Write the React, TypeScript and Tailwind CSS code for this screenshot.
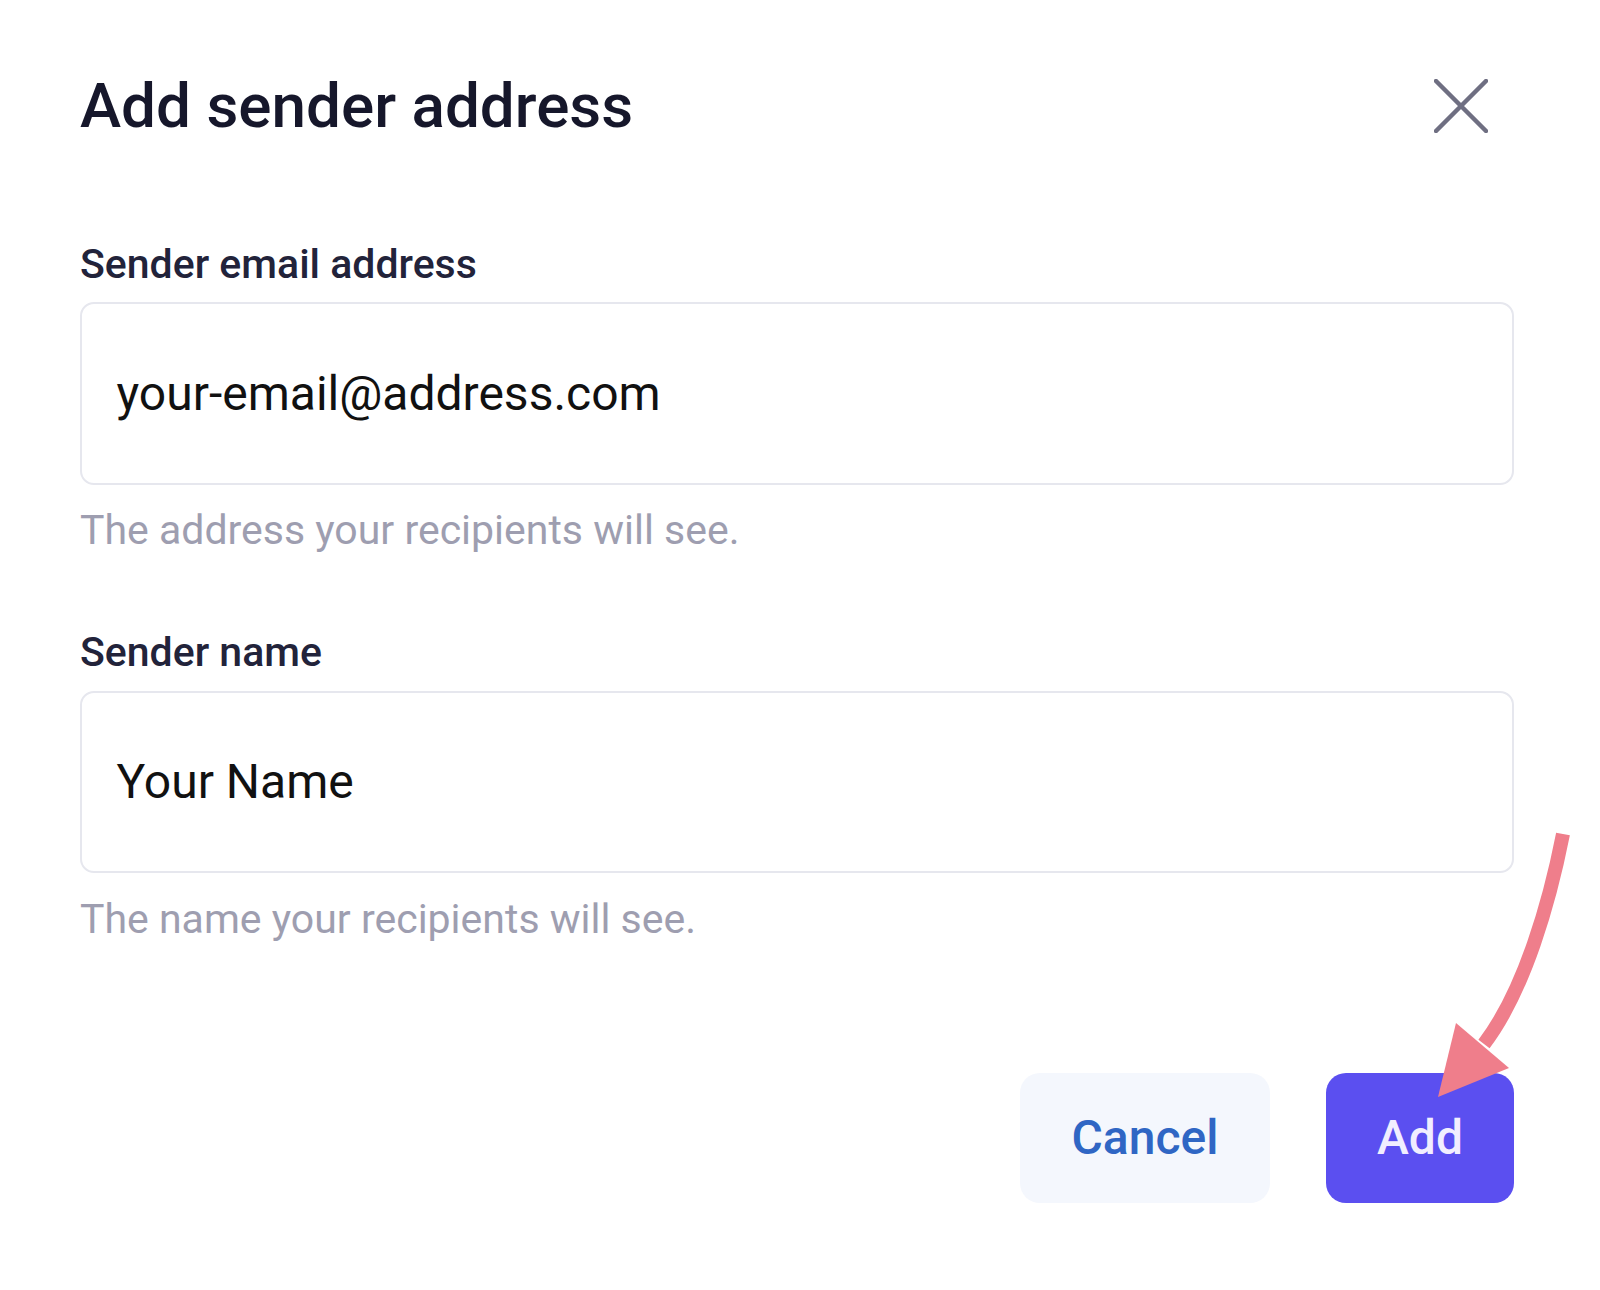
import React from "react";

export default function App() {
  return (
    <div className="relative w-[1600px] h-[1290px] bg-white overflow-hidden [font-family:Roboto,'Liberation_Sans',sans-serif]">
      <div className="pl-[80px] pr-[86px] pt-[75px] flex flex-col">
        <div className="flex items-center justify-between">
          <h1 className="text-[62px] leading-none font-medium text-[#16172b]">Add sender address</h1>
          <button className="w-[54px] h-[54px] mr-[26px] flex items-center justify-center" aria-label="Close">
            <svg width="54" height="54" viewBox="0 0 54 54" fill="none">
              <path d="M2 2 L52 52 M52 2 L2 52" stroke="#6f6f82" strokeWidth="4.5" strokeLinecap="round" />
            </svg>
          </button>
        </div>

        <label className="mt-[107px] text-[41px] leading-none font-medium text-[#22233a]">Sender email address</label>
        <div className="mt-[17px] h-[183px] border-[2.5px] border-[#e6e7ee] rounded-[14px] flex items-center pl-[34.5px]">
          <span className="text-[48px] leading-none text-[#111111]">your-email@address.com</span>
        </div>
        <p className="mt-[25px] text-[41px] leading-none text-[#9e9eb0]">The address your recipients will see.</p>

        <label className="mt-[81px] text-[41px] leading-none font-medium text-[#22233a]">Sender name</label>
        <div className="mt-[18px] h-[182px] border-[2.5px] border-[#e6e7ee] rounded-[14px] flex items-center pl-[34.5px]">
          <span className="text-[48px] leading-none text-[#111111]">Your Name</span>
        </div>
        <p className="mt-[26px] text-[41px] leading-none text-[#9e9eb0]">The name your recipients will see.</p>

        <div className="mt-[133px] flex justify-end gap-[56px]">
          <button className="w-[250px] h-[130px] rounded-[20px] bg-[#f4f7fd] text-[#2f66c4] text-[48px] leading-none font-medium flex items-center justify-center">
            Cancel
          </button>
          <button className="w-[188px] h-[130px] rounded-[20px] bg-[#5b4ff0] text-[#f1eeff] text-[48px] leading-none font-medium flex items-center justify-center">
            Add
          </button>
        </div>
      </div>

      <svg className="absolute left-0 top-0 pointer-events-none" width="1600" height="1290" viewBox="0 0 1600 1290">
        <path d="M1563 834 C1550 900, 1525 990, 1484 1044" stroke="#ef7e8b" strokeWidth="14" fill="none" />
        <polygon points="1438,1097 1456,1023 1509,1068" fill="#ef7e8b" />
      </svg>
    </div>
  );
}
